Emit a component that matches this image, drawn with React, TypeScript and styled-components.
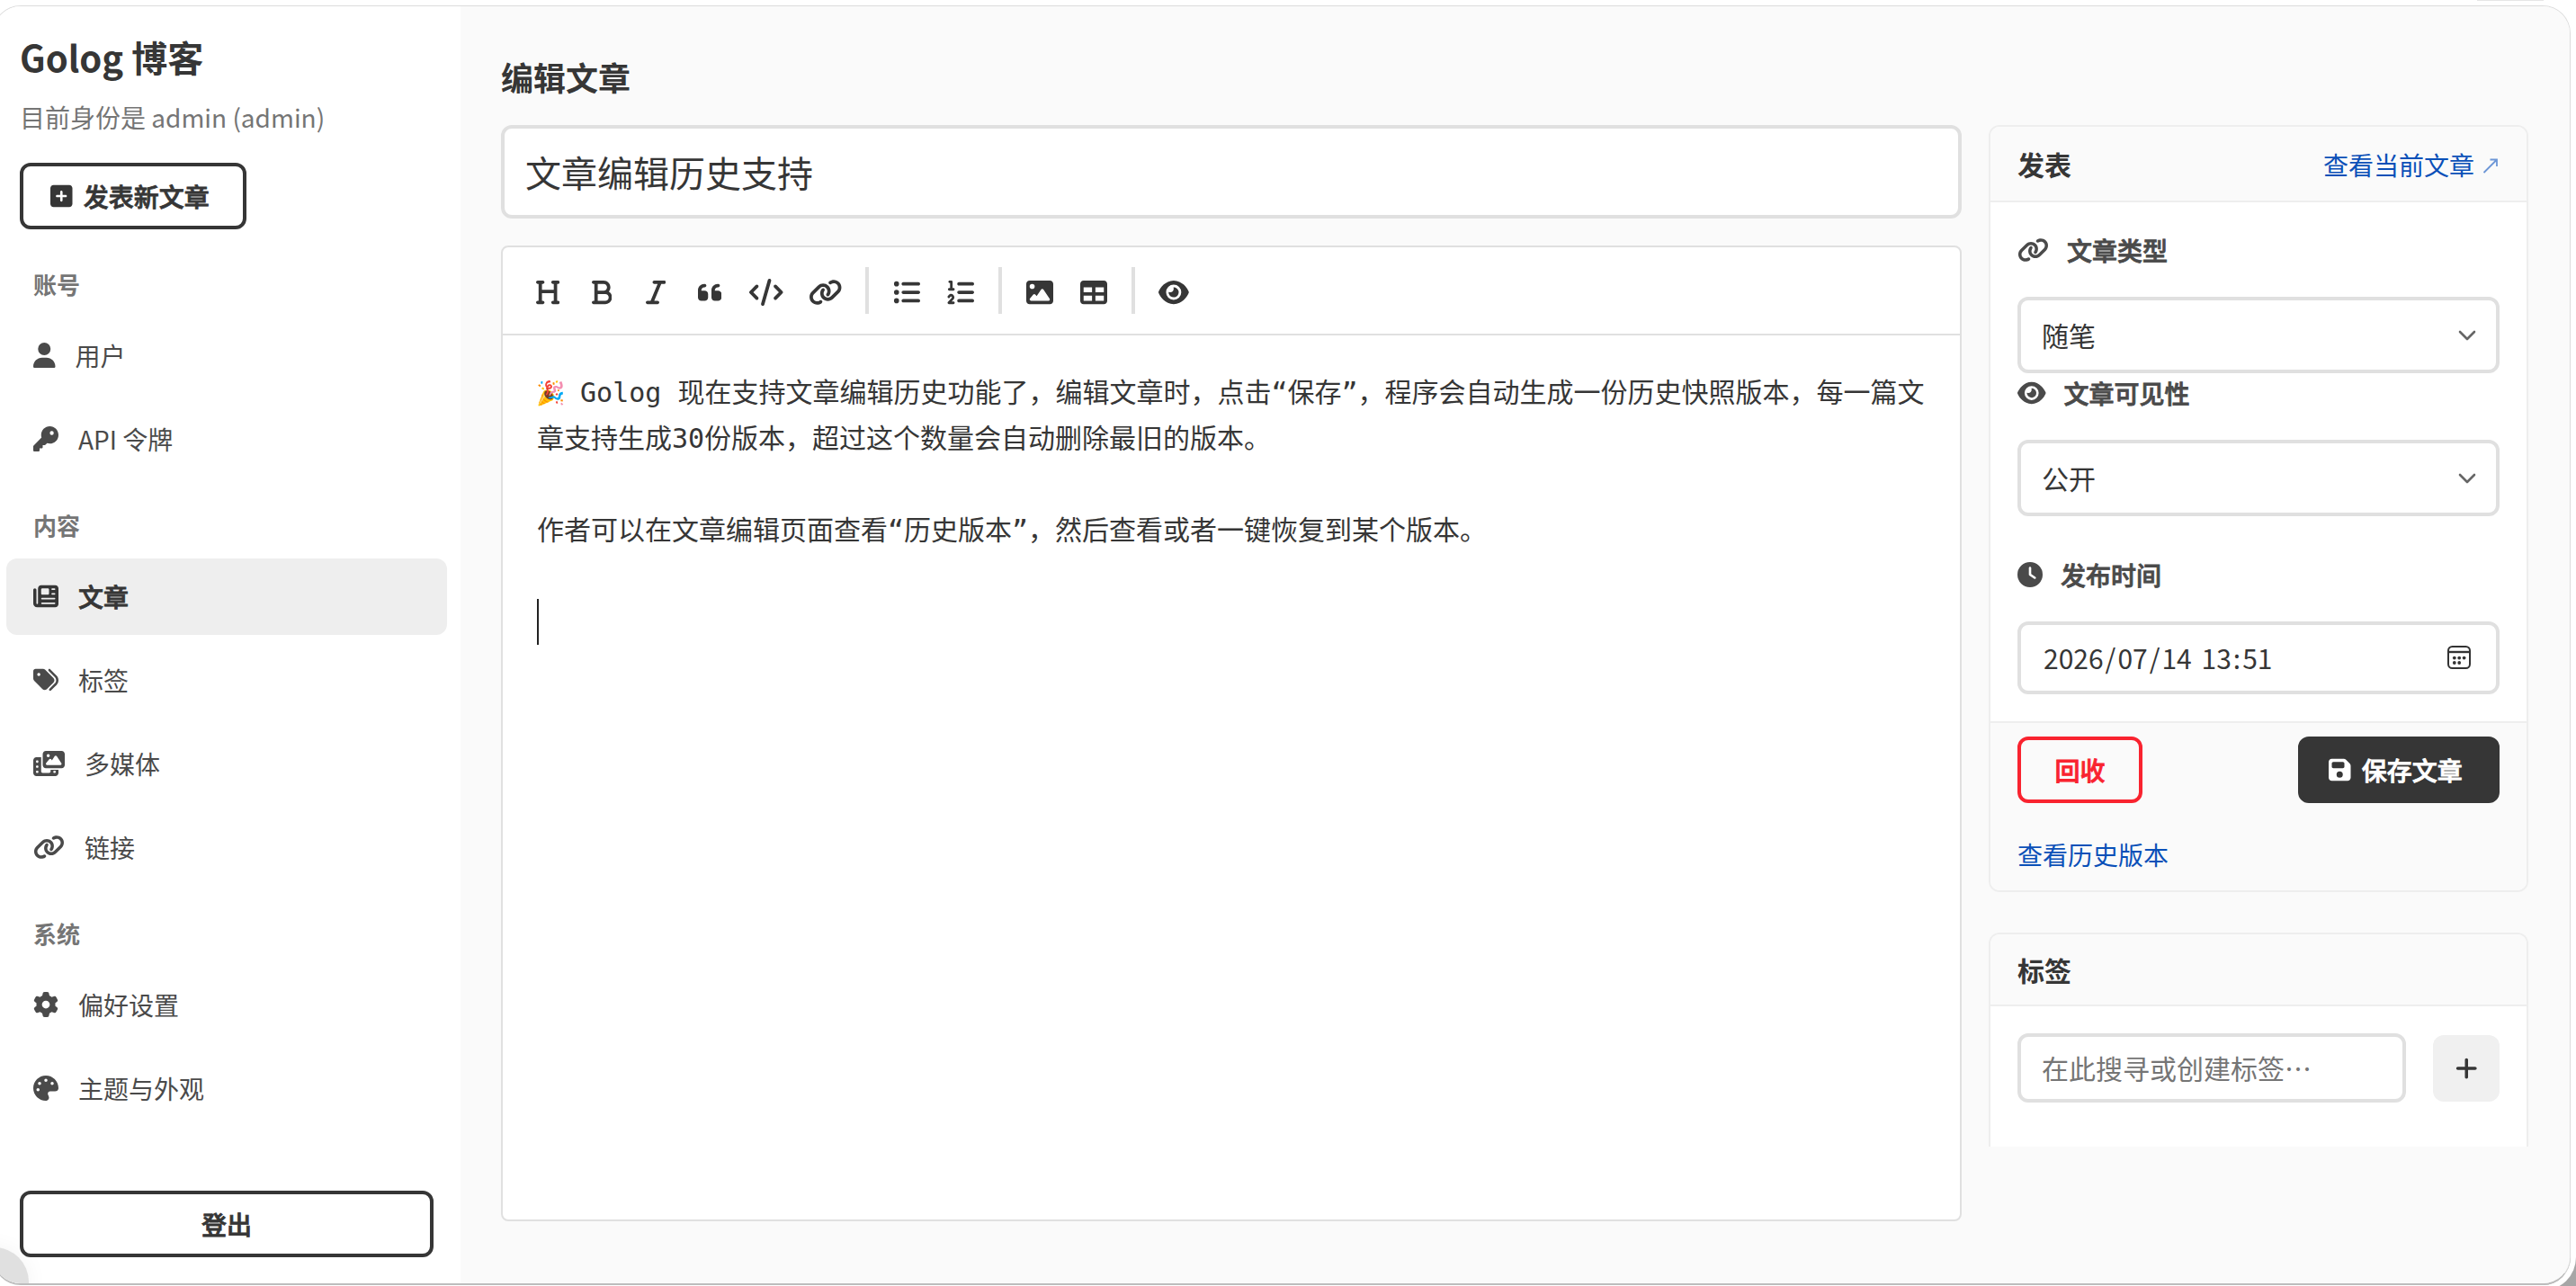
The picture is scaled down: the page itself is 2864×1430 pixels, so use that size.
import React, { FC, ReactNode } from 'react';
import styled, { createGlobalStyle } from 'styled-components';
import {
  FaBold,
  FaClock,
  FaCode,
  FaEye,
  FaFloppyDisk,
  FaGear,
  FaHeading,
  FaImage,
  FaItalic,
  FaKey,
  FaLink,
  FaListOl,
  FaListUl,
  FaNewspaper,
  FaPalette,
  FaPhotoFilm,
  FaPlus,
  FaQuoteLeft,
  FaSquarePlus,
  FaTable,
  FaTags,
  FaUser,
} from 'react-icons/fa6';
import type { IconType } from 'react-icons';

interface NavItem {
  icon: IconType;
  label: string;
  active?: boolean;
}

interface NavGroup {
  title: string;
  items: NavItem[];
}

const navGroups: NavGroup[] = [
  {
    title: '账号',
    items: [
      { icon: FaUser, label: '用户' },
      { icon: FaKey, label: 'API 令牌' },
    ],
  },
  {
    title: '内容',
    items: [
      { icon: FaNewspaper, label: '文章', active: true },
      { icon: FaTags, label: '标签' },
      { icon: FaPhotoFilm, label: '多媒体' },
      { icon: FaLink, label: '链接' },
    ],
  },
  {
    title: '系统',
    items: [
      { icon: FaGear, label: '偏好设置' },
      { icon: FaPalette, label: '主题与外观' },
    ],
  },
];

const toolbarGroups: IconType[][] = [
  [FaHeading, FaBold, FaItalic, FaQuoteLeft, FaCode, FaLink],
  [FaListUl, FaListOl],
  [FaImage, FaTable],
  [FaEye],
];

const content = [
  ' Golog 现在支持文章编辑历史功能了，编辑文章时，点击“保存”，程序会自动生成一份历史快照版本，每一篇文',
  '章支持生成30份版本，超过这个数量会自动删除最旧的版本。',
  '',
  '作者可以在文章编辑页面查看“历史版本”，然后查看或者一键恢复到某个版本。',
  '',
];

// Font Awesome glyph widths, for the ones that are not 512 units wide
const glyphWidths = new Map<IconType, number>([
  [FaPhotoFilm, 640],
  [FaLink, 640],
  [FaCode, 640],
  [FaEye, 576],
  [FaUser, 448],
  [FaSquarePlus, 448],
  [FaFloppyDisk, 448],
  [FaHeading, 448],
  [FaQuoteLeft, 448],
  [FaPlus, 448],
  [FaBold, 384],
  [FaItalic, 384],
]);

const Glyph: FC<{ icon: IconType }> = ({ icon: Icon }) => (
  <GlyphBox $units={glyphWidths.get(Icon) ?? 512}>
    <Icon />
  </GlyphBox>
);

const Sidebar: FC = () => (
  <SidebarWrap>
    <Brand>Golog 博客</Brand>
    <Identity>目前身份是 admin (admin)</Identity>
    <NewPostButton>
      <Glyph icon={FaSquarePlus} />
      发表新文章
    </NewPostButton>
    <Nav>
      {navGroups.map((group) => (
        <NavSection key={group.title}>
          <NavLabel>{group.title}</NavLabel>
          <NavList>
            {group.items.map(({ icon, label, active }) => (
              <NavRow key={label} $active={active}>
                <Glyph icon={icon} />
                {label}
              </NavRow>
            ))}
          </NavList>
        </NavSection>
      ))}
    </Nav>
    <LogoutButton>登出</LogoutButton>
  </SidebarWrap>
);

const Editor: FC = () => (
  <EditorWrap>
    <Toolbar>
      {toolbarGroups.map((group, index) => (
        <React.Fragment key={index}>
          {index > 0 && <Separator />}
          {group.map((icon, i) => (
            <ToolButton key={i}>
              <Glyph icon={icon} />
            </ToolButton>
          ))}
        </React.Fragment>
      ))}
    </Toolbar>
    <EditorText>
      {content.map((line, index) => (
        <TextLine key={index}>
          {index === 0 && <Emoji>🎉</Emoji>}
          {line}
        </TextLine>
      ))}
      <Caret />
    </EditorText>
  </EditorWrap>
);

interface FieldProps {
  icon: IconType;
  label: string;
  children: ReactNode;
}

const Field: FC<FieldProps> = ({ icon, label, children }) => (
  <FieldWrap>
    <FieldLabel>
      <Glyph icon={icon} />
      {label}
    </FieldLabel>
    {children}
  </FieldWrap>
);

const Select: FC<{ value: string }> = ({ value }) => (
  <SelectBox>
    {value}
    <svg width="20" height="12" viewBox="0 0 20 12" fill="none">
      <path
        d="M2 2l8 8 8-8"
        stroke="#666"
        strokeWidth="2.6"
        strokeLinecap="round"
        strokeLinejoin="round"
      />
    </svg>
  </SelectBox>
);

const CalendarIcon: FC = () => (
  <svg width="28" height="28" viewBox="0 0 28 28" fill="none">
    <rect
      x="2"
      y="2"
      width="24"
      height="24"
      rx="4.5"
      stroke="#333"
      strokeWidth="2"
    />
    <path d="M2 8h24" stroke="#333" strokeWidth="2.4" />
    <g fill="#333">
      <circle cx="8.8" cy="14.6" r="1.9" />
      <circle cx="14.2" cy="14.6" r="1.9" />
      <circle cx="19.6" cy="14.6" r="1.9" />
      <circle cx="8.8" cy="20" r="1.9" />
      <circle cx="14.2" cy="20" r="1.9" />
    </g>
  </svg>
);

const PublishPanel: FC = () => (
  <Panel>
    <PanelHeader $height={84}>
      <PanelTitle>发表</PanelTitle>
      <TextLink>
        查看当前文章
        <svg width="18" height="22" viewBox="0 0 18 22" fill="none">
          <path
            d="M1.5 20L16 5.5M8.5 5.5H16V13"
            stroke="#6c96d6"
            strokeWidth="1.8"
          />
        </svg>
      </TextLink>
    </PanelHeader>
    <PanelBody>
      <Field icon={FaLink} label="文章类型">
        <Select value="随笔" />
      </Field>
      <Field icon={FaEye} label="文章可见性">
        <Select value="公开" />
      </Field>
      <DateField>
        <Field icon={FaClock} label="发布时间">
          <DateBox>
            <DateValue>
              <span>2026</span>/<span>07</span>/<span>14</span>{' '}
              <span>13</span>:<span>51</span>
            </DateValue>
            <CalendarIcon />
          </DateBox>
        </Field>
      </DateField>
    </PanelBody>
    <PanelFooter>
      <FooterActions>
        <DangerButton>回收</DangerButton>
        <SaveButton>
          <Glyph icon={FaFloppyDisk} />
          保存文章
        </SaveButton>
      </FooterActions>
      <TextLink>查看历史版本</TextLink>
    </PanelFooter>
  </Panel>
);

const TagPanel: FC = () => (
  <Panel $cut>
    <PanelHeader $height={80}>
      <PanelTitle>标签</PanelTitle>
    </PanelHeader>
    <TagBody>
      <TagInput>在此搜寻或创建标签…</TagInput>
      <AddButton>
        <Glyph icon={FaPlus} />
      </AddButton>
    </TagBody>
  </Panel>
);

const App: FC = () => (
  <Desktop>
    <GlobalStyle />
    <Window>
      <Sidebar />
      <Main>
        <PageTitle>编辑文章</PageTitle>
        <Columns>
          <EditColumn>
            <TitleInput>文章编辑历史支持</TitleInput>
            <Editor />
          </EditColumn>
          <SideColumn>
            <PublishPanel />
            <TagPanel />
          </SideColumn>
        </Columns>
      </Main>
      <Bubble />
    </Window>
    <TopHandle />
  </Desktop>
);

const GlobalStyle = createGlobalStyle`
  *, *::before, *::after {
    box-sizing: border-box;
  }
  body {
    margin: 0;
    background: #fff;
    color: #363636;
    font-family: 'Noto Sans CJK SC', 'Noto Sans', sans-serif;
    font-size: 28px;
    line-height: 1.5;
  }
  svg {
    display: block;
    flex: none;
  }
`;

const GlyphBox = styled.span<{ $units: number }>`
  flex: none;

  svg {
    width: ${({ $units }) => $units / 512}em;
    height: 1em;
  }
`;

const Desktop = styled.div`
  position: relative;
  width: 2864px;
  height: 1430px;
  padding-top: 6px;
  overflow: hidden;
  background: linear-gradient(315deg, #a6a6a6 34px, #fff 35px);
`;
const Window = styled.div`
  position: relative;
  display: flex;
  width: 2866px;
  height: 1423px;
  margin-left: -8px;
  padding-left: 7px;
  overflow: hidden;
  border: 1px solid #dcdcdc;
  border-bottom: 2px solid #bdbdbd;
  border-radius: 31px;
  background: linear-gradient(90deg, #fff 300px, #fafafa 600px);
  box-shadow: 0 0 0 6px #fff;
`;
const TopHandle = styled.div`
  position: absolute;
  top: 0;
  left: 2754px;
  width: 74px;
  height: 1px;
  background: #e6e6e6;
`;
const Bubble = styled.div`
  position: absolute;
  left: -38px;
  bottom: -37px;
  width: 77px;
  height: 77px;
  border-radius: 50%;
  background: #e0e0e0;
  box-shadow: 0 0 24px rgba(0, 0, 0, 0.05);
`;

const SidebarWrap = styled.aside`
  display: flex;
  flex: none;
  flex-direction: column;
  align-items: flex-start;
  width: 512px;
  padding: 26px 15px 29px 22px;
  background: #fff;
`;
const Brand = styled.h1`
  margin: 0;
  font-size: 40px;
  font-weight: 700;
  line-height: 60px;
`;
const Identity = styled.p`
  margin: 16px 0 30px;
  color: #757575;
  line-height: 42px;
`;
const Button = styled.button`
  display: flex;
  align-items: center;
  justify-content: center;
  height: 74px;
  padding: 0;
  border: 4px solid #363636;
  border-radius: 12px;
  background: #fff;
  color: #363636;
  font: inherit;
  font-weight: 500;
  -webkit-text-stroke: 0.8px currentColor;
`;
const NewPostButton = styled(Button)`
  gap: 12px;
  width: 252px;
  padding-right: 7px;
`;
const LogoutButton = styled(Button)`
  width: 460px;
  margin-top: auto;
`;
const Nav = styled.nav`
  align-self: stretch;
  margin: 41px 0 0 -15px;
`;
const NavSection = styled.section`
  margin-bottom: 33px;
`;
const NavLabel = styled.h2`
  margin: 0 0 17px;
  padding-left: 30px;
  color: #757575;
  font-size: 26px;
  font-weight: 700;
  line-height: 40px;
`;
const NavList = styled.div`
  display: flex;
  flex-direction: column;
  gap: 8px;
`;
const NavRow = styled.a<{ $active?: boolean }>`
  display: flex;
  align-items: center;
  gap: 22px;
  height: 85px;
  padding: 0 0 2px 30px;
  border-radius: 12px;
  background: ${({ $active }) => ($active ? '#eee' : 'transparent')};
  color: ${({ $active }) => ($active ? '#363636' : '#4a4a4a')};
  font-weight: ${({ $active }) => ($active ? 500 : 400)};
  -webkit-text-stroke: ${({ $active }) => ($active ? 0.8 : 0)}px currentColor;
`;

const Main = styled.main`
  flex: 1;
  padding: 51px 46px 0 45px;
  background: #fafafa;
`;
const PageTitle = styled.h1`
  margin: 0 0 27px;
  font-size: 36px;
  font-weight: 700;
  line-height: 54px;
`;
const Columns = styled.div`
  display: flex;
  gap: 30px;
`;
const EditColumn = styled.div`
  display: flex;
  flex-direction: column;
  gap: 30px;
  width: 1624px;
`;
const TitleInput = styled.div`
  height: 104px;
  padding: 0 23px;
  border: 4px solid #e0e0e0;
  border-radius: 12px;
  background: #fff;
  font-size: 40px;
  line-height: 96px;
`;
const EditorWrap = styled.section`
  height: 1085px;
  border: 2px solid #e0e0e0;
  border-radius: 8px;
  background: #fff;
`;
const Toolbar = styled.div`
  display: flex;
  align-items: center;
  height: 98px;
  padding: 0 20px;
  border-bottom: 2px solid #e0e0e0;
`;
const ToolButton = styled.span`
  display: flex;
  justify-content: center;
  min-width: 60px;
  padding: 4px 14px 0;
  font-size: 30px;
`;
const Separator = styled.span`
  width: 4px;
  height: 52px;
  margin: 0 12px;
  background: #e0e0e0;
`;
const EditorText = styled.div`
  padding: 38px;
  font-family: 'DejaVu Sans Mono', 'Noto Sans CJK SC', 'Noto Color Emoji',
    monospace;
  font-size: 30px;
`;
const TextLine = styled.div`
  height: 51px;
  line-height: 51px;
  white-space: pre;
`;
const Emoji = styled.span`
  display: inline-block;
  width: 31px;
  margin-left: -1px;
  font-size: 26px;
  line-height: 1;
  vertical-align: 1px;
`;
const Caret = styled.div`
  width: 2px;
  height: 51px;
  background: #222;
`;

const SideColumn = styled.div`
  display: flex;
  flex-direction: column;
  gap: 45px;
  width: 600px;
`;
const Panel = styled.section<{ $cut?: boolean }>`
  overflow: hidden;
  border: 2px solid #eee;
  border-bottom-width: ${({ $cut }) => ($cut ? 0 : 2)}px;
  border-radius: ${({ $cut }) => ($cut ? '12px 12px 0 0' : '12px')};
  background: #fff;
`;
const PanelHeader = styled.header<{ $height: number }>`
  display: flex;
  align-items: center;
  justify-content: space-between;
  height: ${({ $height }) => $height}px;
  padding: 0 31px 0 30px;
  border-bottom: 2px solid #eee;
  background: #fafafa;
`;
const PanelTitle = styled.h2`
  margin: 0;
  font-size: 30px;
  font-weight: 700;
`;
const TextLink = styled.a`
  display: flex;
  align-items: center;
  gap: 9px;
  padding-top: 2px;
  color: #0a50b8;
`;
const PanelBody = styled.div`
  padding: 31px 30px 30px;
`;
const FieldWrap = styled.div`
  display: flex;
  flex-direction: column;
  gap: 29px;
`;
const FieldLabel = styled.div`
  display: flex;
  align-items: center;
  gap: 20px;
  height: 45px;
  padding-bottom: 2px;
  color: #4a4a4a;
  font-weight: 500;
  -webkit-text-stroke: 0.8px currentColor;
`;
const DateField = styled.div`
  margin-top: 43px;
`;
const SelectBox = styled.div`
  display: flex;
  align-items: center;
  justify-content: space-between;
  height: 85px;
  padding: 0 22px 0 23px;
  border: 4px solid #e0e0e0;
  border-radius: 12px;
  background: #fff;
  font-size: 30px;
`;
const DateBox = styled(SelectBox)`
  height: 81px;
  padding: 0 27px 2px 23px;
`;
const DateValue = styled.div`
  padding-top: 2px;

  span {
    padding: 0 2px;
  }
`;
const PanelFooter = styled.footer`
  height: 188px;
  padding: 15px 30px 0;
  border-top: 2px solid #eee;
  background: #fafafa;
`;
const FooterActions = styled.div`
  display: flex;
  justify-content: space-between;
  margin-bottom: 34px;
`;
const DangerButton = styled(Button)`
  width: 139px;
  border-color: #f9232f;
  background: #fafafa;
  color: #f9232f;
`;
const SaveButton = styled(Button)`
  gap: 12px;
  width: 224px;
  padding-right: 7px;
  background: #363636;
  color: #fff;
`;
const TagBody = styled.div`
  display: flex;
  align-items: center;
  justify-content: space-between;
  height: 156px;
  padding: 30px 30px 49px;
`;
const TagInput = styled.div`
  width: 432px;
  height: 77px;
  padding-left: 23px;
  border: 4px solid #e0e0e0;
  border-radius: 12px;
  color: #757575;
  font-size: 30px;
  line-height: 69px;
`;
const AddButton = styled.span`
  display: flex;
  align-items: center;
  justify-content: center;
  width: 74px;
  height: 74px;
  border-radius: 12px;
  background: #f0f0f0;
`;

export default App;
